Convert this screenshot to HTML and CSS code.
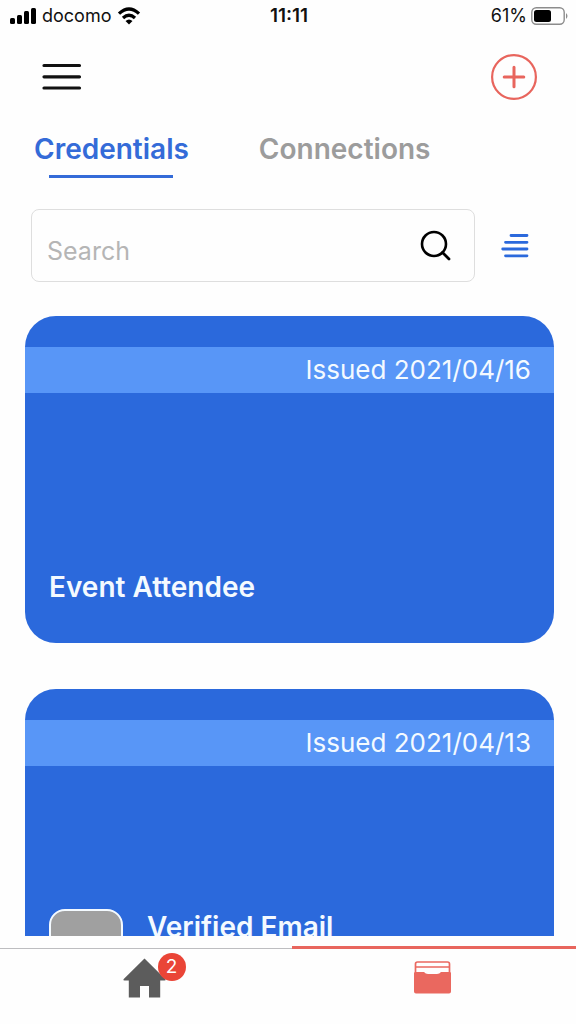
FILE: index.html
```html
<!DOCTYPE html>
<html lang="en">
<head>
<meta charset="utf-8">
<meta name="viewport" content="width=device-width, initial-scale=1">
<title>Credentials</title>
<link rel="stylesheet" href="styles.css">
</head>
<body>
<div class="app">
  <div class="status">
    <div class="status-left">
      <svg class="signal" viewBox="0 0 26 16" width="26" height="16" aria-hidden="true">
        <rect x="0" y="10" width="5" height="6" rx="1.5"/><rect x="7" y="7" width="5" height="9" rx="1.5"/><rect x="14" y="3" width="5" height="13" rx="1.5"/><rect x="21" y="0" width="5" height="16" rx="1.5"/>
      </svg>
      <span>docomo</span>
      <svg class="wifi" viewBox="0 0 24 18" width="24" height="18" aria-hidden="true">
        <path d="M2 6.6Q12-2.6 22 6.6M6 10.9Q12 5.500 18 10.900" fill="none" stroke="#000" stroke-width="3.300"/>
        <path d="M8.500 14Q12 11 15.500 14L12 17.500Z"/>
      </svg>
    </div>
    <time class="clock">11:11</time>
    <div class="status-right">
      <span>61%</span>
      <svg viewBox="0 0 37 18" width="37" height="18" aria-hidden="true">
        <rect x="0.800" y="0.800" width="32.400" height="16.400" rx="4.500" fill="none" stroke="#8c8c8c" stroke-width="1.400"/>
        <rect x="3" y="3" width="17" height="12" rx="2.500"/>
        <path d="M35 6Q38 9 35 12Z" fill="#8c8c8c"/>
      </svg>
    </div>
  </div>

  <header class="header">
    <button class="icon-button" type="button" aria-label="Menu">
      <svg viewBox="0 0 40 28" width="40" height="28"><path d="M2 2.500H37.500M2 13.800H37.500M2 25H37.500" fill="none" stroke="#111" stroke-width="3.200" stroke-linecap="round"/></svg>
    </button>
    <button class="icon-button" type="button" aria-label="Add">
      <svg viewBox="0 0 46 46" width="46" height="46"><circle cx="23" cy="23" r="21.900" fill="none" stroke="#e8655d" stroke-width="2.200"/><path d="M13.200 23H32.800M23 13.200V32.800" fill="none" stroke="#e8655d" stroke-width="3" stroke-linecap="round"/></svg>
    </button>
  </header>

  <nav class="tabs" aria-label="Sections">
    <a class="tab tab-active" href="#credentials" aria-current="page">Credentials</a>
    <a class="tab" href="#connections">Connections</a>
  </nav>

  <form class="search-row">
    <div class="search-box">
      <input class="search-input" type="text" placeholder="Search" aria-label="Search">
      <button class="icon-button" type="submit" aria-label="Search">
        <svg viewBox="0 0 32 32" width="32" height="32"><circle cx="14" cy="14" r="12" fill="none" stroke="#000" stroke-width="2.600"/><path d="M22.500 22.500L29 29" stroke="#000" stroke-width="2.800" stroke-linecap="round"/></svg>
      </button>
    </div>
    <button class="icon-button" type="button" aria-label="Sort">
      <svg viewBox="0 0 28 24" width="28" height="24"><path d="M10 1.500H26M4.500 8.300H26M1.700 15H26M4.500 21.800H26" fill="none" stroke="#2b69dc" stroke-width="2.800" stroke-linecap="round"/></svg>
    </button>
  </form>

  <main class="list" id="credentials">
    <article class="card">
      <p class="issued">Issued 2021/04/16</p>
      <div class="card-info"><h2 class="card-title">Event Attendee</h2></div>
    </article>
    <article class="card">
      <p class="issued">Issued 2021/04/13</p>
      <div class="card-info card-info-logo"><div class="card-logo"></div><h2 class="card-title">Verified Email</h2></div>
    </article>
  </main>

  <nav class="bottom" aria-label="Main">
    <a class="bottom-item" href="#home" aria-label="Home, 2 notifications">
      <span class="home-icon">
        <svg viewBox="0 0 43 40" width="43" height="40" aria-hidden="true"><path d="M21.500 0.500L42.500 21.200Q43 22.500 41.500 22.500H37.200V39.500H26V28H17V39.500H5.800V22.500H1.500Q0 22.500 0.500 21.200Z" fill="#5c5c5c"/></svg>
        <span class="badge">2</span>
      </span>
    </a>
    <a class="bottom-item bottom-active" href="#credentials" aria-label="Credentials">
      <svg viewBox="0 0 37 33" width="37" height="33" aria-hidden="true"><path d="M1.500 12V3Q1.500 1 3.500 1H33.500Q35.500 1 35.500 3V12M2 6H35" fill="none" stroke="#ea685f" stroke-width="1.700"/><path d="M1 11H10Q11.500 13 14 13H23Q25.500 13 27 11H36Q37 11 37 12.500V30.500Q37 32.500 35 32.500H2Q0 32.500 0 30.500V12.500Q0 11 1 11Z" fill="#ea685f"/></svg>
    </a>
  </nav>
</div>
</body>
</html>
```
FILE: styles.css
```css
* {
  box-sizing: border-box;
}

body {
  margin: 0;
  background: #fefefe;
  color: #111;
  font-family: Inter, Roboto, "Liberation Sans", sans-serif;
}

.app {
  display: flex;
  flex-direction: column;
  height: 100vh;
  overflow: hidden;
}

.status {
  display: grid;
  grid-template-columns: 1fr auto 1fr;
  align-items: center;
  height: 32px;
  padding: 0 8px 0 10px;
  font-size: 18px;
  line-height: 24px;
}

.status-left,
.status-right {
  display: flex;
  align-items: center;
  gap: 6px;
}

.status-right {
  justify-content: flex-end;
  gap: 4px;
}

.clock {
  font-size: 19px;
  font-weight: 600;
}

.header {
  display: flex;
  align-items: center;
  justify-content: space-between;
  height: 90px;
  padding: 0 39px 0 42px;
}

.icon-button {
  display: flex;
  padding: 0;
  border: 0;
  background: none;
  cursor: pointer;
}

.tabs {
  display: flex;
  gap: 70px;
  padding: 8px 34px 0;
}

.tab {
  display: flex;
  flex-direction: column;
  align-items: center;
  height: 48px;
  color: #9c9c9c;
  font-size: 28px;
  font-weight: 600;
  line-height: 38px;
  text-decoration: none;
}

.tab-active {
  color: #346bd8;
}

.tab-active::after {
  content: "";
  width: 80%;
  height: 3px;
  margin-top: 7px;
  background: #346bd8;
}

.search-row {
  display: flex;
  align-items: center;
  gap: 26px;
  margin: 31px 47px 34px 31px;
}

.search-box {
  display: flex;
  flex: 1;
  align-items: center;
  min-width: 0;
  height: 73px;
  padding: 0 22px 0 15px;
  border: 1px solid #dedede;
  border-radius: 8px;
}

.search-input {
  flex: 1;
  min-width: 0;
  height: 100%;
  padding: 10px 0 0;
  border: 0;
  outline: 0;
  background: none;
  color: #111;
  font: inherit;
  font-size: 25px;
}

.search-input::placeholder {
  color: #b5b5b5;
  opacity: 1;
}

.list {
  display: flex;
  flex: 1;
  flex-direction: column;
  gap: 46px;
  min-height: 0;
  margin: 0 22px 10px 25px;
  overflow: hidden;
}

.card {
  display: flex;
  flex-direction: column;
  flex-shrink: 0;
  height: 327px;
  padding-top: 31px;
  border-radius: 31px;
  background: #2b69dc;
  color: #f4faff;
}

.issued {
  margin: 0;
  padding: 0 23px;
  background: #5896f7;
  font-size: 26px;
  line-height: 46px;
  text-align: right;
}

.card-info {
  display: flex;
  align-items: center;
  gap: 24px;
  margin-top: auto;
  padding: 0 24px 38px;
}

.card-info-logo {
  align-items: flex-start;
  padding-bottom: 33px;
}

.card-logo {
  width: 74px;
  height: 74px;
  border: 2px solid #f4faff;
  border-radius: 16px;
  background: #a0a0a0;
}

.card-title {
  margin: 0;
  font-size: 28px;
  font-weight: 600;
  line-height: 36px;
}

.bottom {
  display: grid;
  grid-template-columns: 1fr 1fr;
  height: 78px;
  background: linear-gradient(#bdbdc0, #bdbdc0) 0 2px / 100% 1px no-repeat;
}

.bottom-item {
  display: flex;
  justify-content: center;
  padding-top: 12px;
}

.bottom-active {
  margin-left: 4px;
  padding: 12px 4px 0 0;
  border-top: 3px solid #e8655d;
}

.home-icon {
  position: relative;
}

.badge {
  position: absolute;
  top: -5px;
  right: -20px;
  width: 28px;
  height: 28px;
  border-radius: 50%;
  background: #ea4537;
  color: #fff;
  font-size: 19px;
  line-height: 28px;
  text-align: center;
}
```
